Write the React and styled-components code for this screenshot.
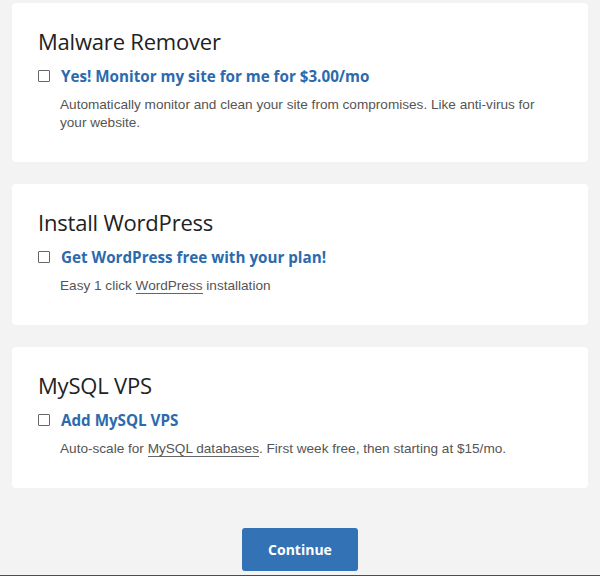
import React from 'react';
import styled, { createGlobalStyle } from 'styled-components';

const GlobalStyle = createGlobalStyle`
  body {
    margin: 0;
    background: #f3f3f3;
    font-family: "Liberation Sans", Arial, sans-serif;
  }
`;

const Page = styled.div`
  padding: 3px 12px 0;
  display: flex;
  flex-direction: column;
  gap: 22px;
`;

const Card = styled.div`
  background: #ffffff;
  border-radius: 4px;
  padding: 24px 26px 30px;
`;

const Title = styled.h2`
  margin: 0;
  font-family: "Open Sans", sans-serif;
  font-weight: 400;
  font-size: 22px;
  line-height: 28px;
  color: #222;
  letter-spacing: -0.2px;
`;

const OptionRow = styled.label`
  display: flex;
  align-items: center;
  gap: 11px;
  margin-top: 11px;
  height: 20px;
  cursor: pointer;
`;

const Box = styled.span`
  width: 10px;
  height: 10px;
  border: 1px solid #666;
  border-radius: 1px;
  background: #fff;
  flex: none;
`;

const OptionLabel = styled.span`
  font-family: "Open Sans", sans-serif;
  font-weight: 700;
  font-size: 15.2px;
  color: #2b6aad;
`;

const Description = styled.p`
  margin: 10px 0 0 22px;
  font-size: 13.6px;
  line-height: 18px;
  color: #555;
`;

const Underlined = styled.span`
  border-bottom: 1px solid #666;
`;

const Actions = styled.div`
  display: flex;
  justify-content: center;
  padding-top: 18px;
`;

const ContinueButton = styled.button`
  width: 116px;
  height: 43px;
  border: none;
  border-radius: 3px;
  background: #3472b6;
  color: #fff;
  font-family: "Open Sans", sans-serif;
  font-weight: 700;
  font-size: 14px;
  cursor: pointer;
`;

const FooterEdge = styled.div`
  margin-top: 4px;
  height: 3px;
  background: #44504b;
`;

const addons = [
  {
    title: 'Malware Remover',
    label: 'Yes! Monitor my site for me for $3.00/mo',
    desc: (
      <>Automatically monitor and clean your site from compromises. Like anti-virus for your website.</>
    ),
  },
  {
    title: 'Install WordPress',
    label: 'Get WordPress free with your plan!',
    desc: (
      <>Easy 1 click <Underlined>WordPress</Underlined> installation</>
    ),
  },
  {
    title: 'MySQL VPS',
    label: 'Add MySQL VPS',
    desc: (
      <>Auto-scale for <Underlined>MySQL databases</Underlined>. First week free, then starting at $15/mo.</>
    ),
  },
];

export default function App() {
  return (
    <>
      <GlobalStyle />
      <Page>
        {addons.map((a) => (
          <Card key={a.title}>
            <Title>{a.title}</Title>
            <OptionRow>
              <Box />
              <OptionLabel>{a.label}</OptionLabel>
            </OptionRow>
            <Description>{a.desc}</Description>
          </Card>
        ))}
        <Actions>
          <ContinueButton>Continue</ContinueButton>
        </Actions>
      </Page>
      <FooterEdge />
    </>
  );
}
